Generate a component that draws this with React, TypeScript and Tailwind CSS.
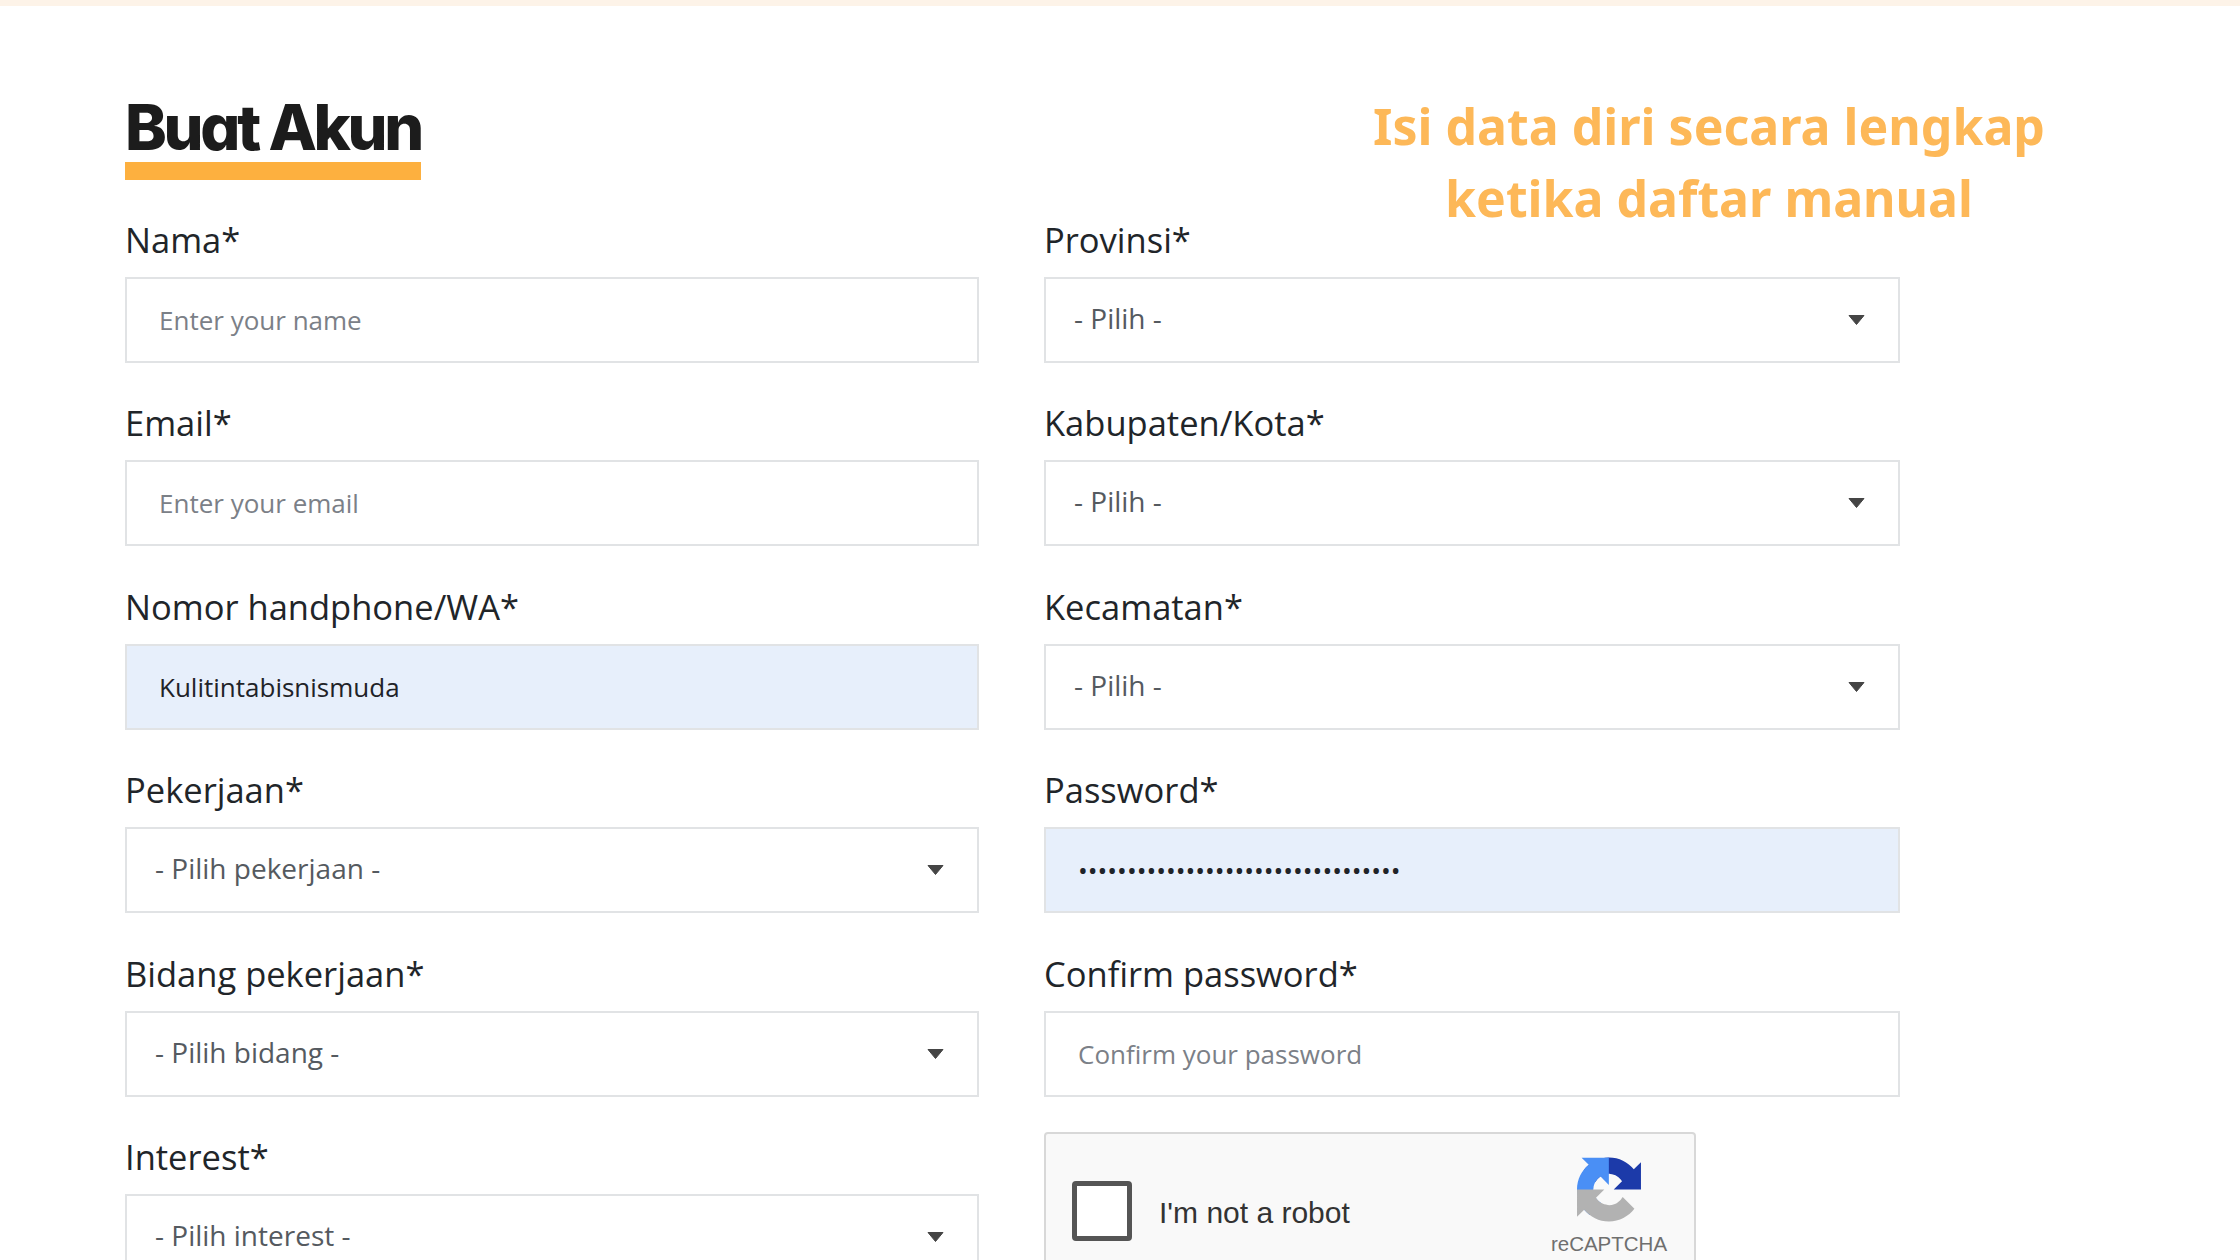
const Caret = () => (
  <svg viewBox="0 0 17 10" className="w-[17px] h-[10px] shrink-0">
    <path d="M1 0.5h15L8.5 9.5z" fill="#454545" stroke="#454545" strokeLinejoin="round" />
  </svg>
);

const RecaptchaLogo = () => (
  <svg viewBox="0 0 64 64" className="w-[64px] h-[65px]">
    <path
      d="M64 31.955l-.033-1.37V4.687l-7.16 7.16C50.948 4.674 42.033.093 32.05.093c-10.4 0-19.622 4.96-25.458 12.64l11.736 11.86a15.55 15.55 0 0 1 4.754-5.334c2.05-1.6 4.952-2.906 8.968-2.906.485 0 .86.057 1.137.163 4.976.393 9.288 3.14 11.828 7.124l-8.307 8.307 32.29.008"
      fill="#1c3aa9"
    />
    <path
      d="M31.862.094l-1.37.033H4.594l7.16 7.16C4.58 13.147 0 22.06 0 32.046c0 10.4 4.96 19.622 12.64 25.458L24.5 45.768a15.55 15.55 0 0 1-5.334-4.754c-1.6-2.05-2.906-4.952-2.906-8.968 0-.485.057-.86.163-1.137.393-4.976 3.14-9.288 7.124-11.828l8.307 8.307L31.862.094"
      fill="#4a8ff5"
    />
    <path
      d="M.001 32.045l.033 1.37v25.898l7.16-7.16c5.86 7.173 14.774 11.754 24.76 11.754 10.4 0 19.622-4.96 25.458-12.64l-11.736-11.86a15.55 15.55 0 0 1-4.754 5.334c-2.05 1.6-4.952 2.906-8.968 2.906-.485 0-.86-.057-1.137-.163-4.976-.393-9.288-3.14-11.828-7.124l8.307-8.307-32.29-.008"
      fill="#b2b2b2"
    />
  </svg>
);

const Field = ({ label, children }: { label: string; children: React.ReactNode }) => (
  <div className="h-[183.4px] flex flex-col">
    <label className="h-[65px] pt-[3px] text-[34.5px] leading-[50px] text-[#212529]">{label}</label>
    {children}
  </div>
);

const TextInput = ({
  placeholder,
  value,
  type = "text",
}: {
  placeholder: string;
  value?: string;
  type?: string;
}) => (
  <input
    type={type}
    placeholder={placeholder}
    defaultValue={value}
    className={`h-[86px] w-full border-2 border-[#e1e3e5] pl-[32px] pr-4 text-[26px] text-[#1f2328] outline-none placeholder:text-[#7b8087] ${
      value ? "bg-[#e7effb]" : "bg-white"
    }`}
  />
);

const SelectBox = ({ text }: { text: string }) => (
  <div className="h-[86px] w-full border-2 border-[#e1e3e5] bg-white pl-[28px] pr-[33px] flex items-center justify-between">
    <span className="text-[28px] text-[#555a60] -mt-[4px]">{text}</span>
    <Caret />
  </div>
);

const App = () => {
  return (
    <div className="relative w-[2240px] h-[1260px] overflow-hidden bg-white font-['Open_Sans',sans-serif]">
      <div className="h-[6px] bg-[#fdf3e8]" />

      <div className="h-[206px] pl-[125px] pt-[86px]">
        <h1 className="w-[296px] font-['Inter',sans-serif] font-extrabold text-[63px] leading-[70px] tracking-[-3.3px] text-[#1c1c1c] whitespace-nowrap [font-feature-settings:'cv11']">
          Buat Akun
        </h1>
        <div className="w-[296px] h-[18px] bg-[#fdb03f]" />
      </div>

      <div className="grid grid-cols-[854px_856px] gap-x-[65px] pl-[125px]">
        <div>
          <Field label="Nama*">
            <TextInput placeholder="Enter your name" />
          </Field>
          <Field label="Email*">
            <TextInput placeholder="Enter your email" />
          </Field>
          <Field label="Nomor handphone/WA*">
            <TextInput placeholder="" value="Kulitintabisnismuda" />
          </Field>
          <Field label="Pekerjaan*">
            <SelectBox text="- Pilih pekerjaan -" />
          </Field>
          <Field label="Bidang pekerjaan*">
            <SelectBox text="- Pilih bidang -" />
          </Field>
          <Field label="Interest*">
            <SelectBox text="- Pilih interest -" />
          </Field>
        </div>

        <div>
          <Field label="Provinsi*">
            <SelectBox text="- Pilih -" />
          </Field>
          <Field label="Kabupaten/Kota*">
            <SelectBox text="- Pilih -" />
          </Field>
          <Field label="Kecamatan*">
            <SelectBox text="- Pilih -" />
          </Field>
          <Field label="Password*">
            <TextInput type="password" placeholder="" value="kulitintabisnismuda2024kulitintab" />
          </Field>
          <Field label="Confirm password*">
            <TextInput placeholder="Confirm your password" />
          </Field>

          <div className="mt-[3px] w-[652px] h-[170px] rounded-[4px] border-2 border-[#d8d8d8] bg-[#f9f9f9] flex items-start pl-[26px] pr-[26px] font-['Liberation_Sans',sans-serif]">
            <div className="mt-[47px] w-[60px] h-[60px] rounded-[4px] border-[5px] border-[#555] bg-white shrink-0" />
            <span className="ml-[27px] mt-[61px] text-[30px] leading-[36px] text-[#333]">I'm not a robot</span>
            <div className="ml-auto mt-[23px] flex flex-col items-center w-[118px]">
              <RecaptchaLogo />
              <span className="mt-[10px] text-[20.5px] leading-[24px] text-[#6f6f6f]">reCAPTCHA</span>
            </div>
          </div>
        </div>
      </div>

      {/* caption pasted over the screenshot */}
      <p className="absolute left-[1309px] top-[90px] w-[800px] text-center font-['Noto_Sans',sans-serif] font-bold text-[50px] leading-[72px] text-[#fdb858]">
        Isi data diri secara lengkap
        <br />
        ketika daftar manual
      </p>
    </div>
  );
};

export default App;
